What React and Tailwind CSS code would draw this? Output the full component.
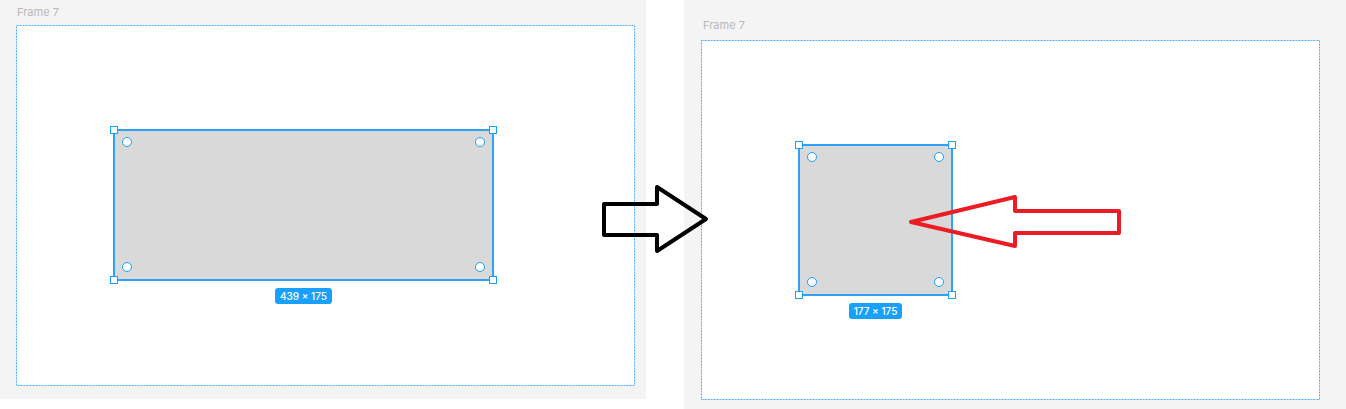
import React from "react";

function Handle({ pos }) {
  return (
    <div
      className={`absolute w-[8px] h-[8px] bg-white border border-[#18a0fb] ${pos}`}
    />
  );
}

function Dot({ pos }) {
  return (
    <div
      className={`absolute w-[10px] h-[10px] rounded-full bg-white border-[1.5px] border-[#18a0fb] ${pos}`}
    />
  );
}

function Selected({ width, label }) {
  return (
    <div className="w-fit flex flex-col items-center">
      <div
        className="relative h-[152px] bg-[#d9d9d9] border-2 border-[#2ea1fb]"
        style={{ width }}
      >
        <Handle pos="-left-[5px] -top-[5px]" />
        <Handle pos="-right-[5px] -top-[5px]" />
        <Handle pos="-left-[5px] -bottom-[5px]" />
        <Handle pos="-right-[5px] -bottom-[5px]" />
        <Dot pos="left-[7px] top-[6px]" />
        <Dot pos="right-[7px] top-[6px]" />
        <Dot pos="left-[7px] bottom-[7px]" />
        <Dot pos="right-[7px] bottom-[7px]" />
      </div>
      <div className="mt-[7px] h-[16px] px-[5px] rounded-[3px] bg-[#18a0fb] text-white text-[10px] leading-[16px] font-medium">
        {label}
      </div>
    </div>
  );
}

// dotted frame outline (figma style, 2px dash / 1px gap)
function FrameOutline({ w, h }) {
  return (
    <svg
      className="absolute left-0 top-0 pointer-events-none"
      width={w}
      height={h}
    >
      <rect
        x="0.5"
        y="0.5"
        width={w - 1}
        height={h - 1}
        fill="none"
        stroke="#48acff"
        strokeWidth="1"
        strokeDasharray="2 1"
      />
    </svg>
  );
}

function Canvas({ className, labelClass, frameClass, frameH, rectWidth, label }) {
  return (
    <div className={`bg-[#f4f4f4] flex flex-col ${className}`}>
      <div className={`text-[11px] text-[#b8b8b8] leading-[14px] ${labelClass}`}>
        Frame 7
      </div>
      <div className={`relative bg-white pl-[97px] pt-[104px] ${frameClass}`}>
        <FrameOutline w={619} h={frameH} />
        <Selected width={rectWidth} label={label} />
      </div>
    </div>
  );
}

export default function App() {
  return (
    <div
      className="relative w-[1346px] h-[409px] bg-white flex items-start"
      style={{ fontFamily: "Inter, 'Noto Sans', sans-serif" }}
    >
      <Canvas
        className="w-[646px] h-[399px] pl-[16px]"
        labelClass="pl-[1px] pt-[5px] pb-[6px]"
        frameClass="w-[619px] h-[361px]"
        frameH={361}
        rectWidth="381px"
        label="439 × 175"
      />
      <Canvas
        className="ml-[38px] w-[662px] h-[409px] pl-[17px]"
        labelClass="pl-[2px] pt-[18px] pb-[8px]"
        frameClass="w-[619px] h-[360px]"
        frameH={360}
        rectWidth="155px"
        label="177 × 175"
      />
      <svg
        className="absolute left-0 top-0 pointer-events-none"
        width="1346"
        height="409"
        viewBox="0 0 1346 409"
      >
        <polygon
          points="604,204 657,204 657,187 706,219 657,251 657,235 604,235"
          fill="none"
          stroke="#000"
          strokeWidth="4"
          strokeLinejoin="round"
        />
        <polygon
          points="911,222 1015,197 1015,211 1119,211 1119,233 1015,233 1015,246"
          fill="none"
          stroke="#ed1c24"
          strokeWidth="4"
          strokeLinejoin="round"
        />
      </svg>
    </div>
  );
}
